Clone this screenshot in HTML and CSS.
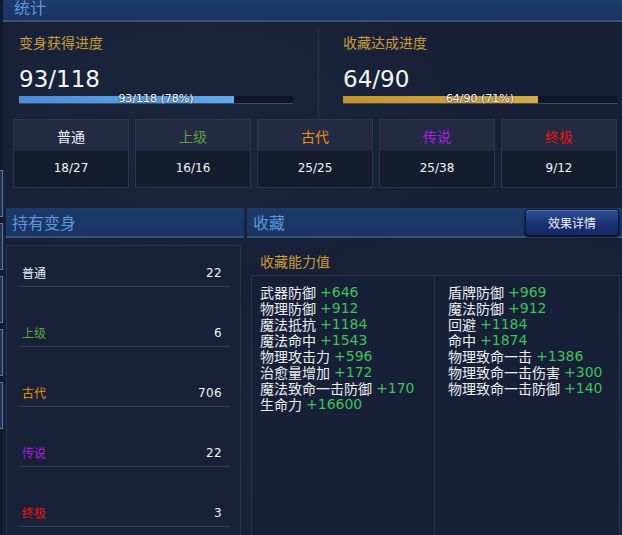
FILE: index.html
```html
<!DOCTYPE html>
<html lang="zh">
<head>
<meta charset="utf-8">
<title>统计</title>
<link rel="stylesheet" href="styles.css">
</head>
<body>
<div class="page">
  <div class="edge">
    <div class="edge-block"></div>
    <div class="edge-block"></div>
    <div class="edge-block"></div>
    <div class="edge-block"></div>
    <div class="edge-block"></div>
  </div>
  <div class="main">
    <div class="top-header"><span>统计</span></div>
    <section class="stats">
      <div class="progress-row">
        <div class="progress">
          <div class="p-title">变身获得进度</div>
          <div class="p-big">93/118</div>
          <div class="bar"><div class="fill blue" style="width:78.5%"></div><span class="bar-text">93/118 (78%)</span></div>
        </div>
        <div class="progress right">
          <div class="p-title">收藏达成进度</div>
          <div class="p-big">64/90</div>
          <div class="bar"><div class="fill gold" style="width:71%"></div><span class="bar-text">64/90 (71%)</span></div>
        </div>
      </div>
      <div class="cards">
        <div class="card"><div class="card-head c-normal">普通</div><div class="card-body">18/27</div></div>
        <div class="card"><div class="card-head c-high">上级</div><div class="card-body">16/16</div></div>
        <div class="card"><div class="card-head c-ancient">古代</div><div class="card-body">25/25</div></div>
        <div class="card"><div class="card-head c-legend">传说</div><div class="card-body">25/38</div></div>
        <div class="card"><div class="card-head c-ultimate">终极</div><div class="card-body">9/12</div></div>
      </div>
    </section>
    <div class="bottom">
      <div class="col-left">
        <div class="sec-header"><span class="sec-title">持有变身</span></div>
        <div class="list-panel">
          <div class="row"><span class="label c-normal">普通</span><span class="num">22</span></div>
          <div class="row"><span class="label c-high">上级</span><span class="num">6</span></div>
          <div class="row"><span class="label c-ancient">古代</span><span class="num">706</span></div>
          <div class="row"><span class="label c-legend">传说</span><span class="num">22</span></div>
          <div class="row"><span class="label c-ultimate">终极</span><span class="num">3</span></div>
        </div>
      </div>
      <div class="col-right">
        <div class="sec-header"><span class="sec-title">收藏</span><button class="btn">效果详情</button></div>
        <div class="coll-title">收藏能力值</div>
        <div class="coll-box">
          <div class="coll-col first">
            <div class="line"><span>武器防御</span><span class="val">+646</span></div>
            <div class="line"><span>物理防御</span><span class="val">+912</span></div>
            <div class="line"><span>魔法抵抗</span><span class="val">+1184</span></div>
            <div class="line"><span>魔法命中</span><span class="val">+1543</span></div>
            <div class="line"><span>物理攻击力</span><span class="val">+596</span></div>
            <div class="line"><span>治愈量增加</span><span class="val">+172</span></div>
            <div class="line"><span>魔法致命一击防御</span><span class="val">+170</span></div>
            <div class="line"><span>生命力</span><span class="val">+16600</span></div>
          </div>
          <div class="coll-col second">
            <div class="line"><span>盾牌防御</span><span class="val">+969</span></div>
            <div class="line"><span>魔法防御</span><span class="val">+912</span></div>
            <div class="line"><span>回避</span><span class="val">+1184</span></div>
            <div class="line"><span>命中</span><span class="val">+1874</span></div>
            <div class="line"><span>物理致命一击</span><span class="val">+1386</span></div>
            <div class="line"><span>物理致命一击伤害</span><span class="val">+300</span></div>
            <div class="line"><span>物理致命一击防御</span><span class="val">+140</span></div>
          </div>
        </div>
      </div>
    </div>
  </div>
</div>
</body>
</html>
```

FILE: styles.css
```css
* { box-sizing: border-box; margin: 0; padding: 0; }
html, body { width: 622px; height: 535px; overflow: hidden; }
body {
  background: #172036;
  font-family: "DejaVu Sans", "Noto Sans CJK SC", sans-serif;
  color: #e9edf3;
}
.page {
  display: flex;
  height: 535px;
  background:
    radial-gradient(ellipse 300px 200px at 480px 420px, rgba(40,55,80,0.35), transparent),
    radial-gradient(ellipse 260px 160px at 200px 120px, rgba(35,50,75,0.35), transparent),
    #172036;
}
.edge {
  width: 3px;
  flex: none;
  background: #101a2e;
  display: flex;
  flex-direction: column;
  padding-top: 170px;
  gap: 6px;
}
.edge-block {
  height: 47px;
  background: #1f3356;
  border: 1px solid #5a7aa6;
  border-left: none;
}
.main { flex: 1; display: flex; flex-direction: column; min-width: 0; }

.top-header {
  height: 22px;
  background: linear-gradient(#1c3a6b, #1a3462);
  border-bottom: 2px solid #3a5479;
  padding-left: 11px;
  overflow: hidden;
}
.top-header span {
  display: block;
  font-family: "Noto Sans CJK SC", sans-serif;
  font-size: 16px;
  line-height: 14px;
  color: #5e97de;
}

.stats { display: flex; flex-direction: column; }
.progress-row { display: flex; height: 97px; }
.progress { width: 315px; padding: 10px 0 0 16px; flex: none; }
.progress.right {
  width: auto;
  flex: 1;
  margin-top: 6px;
  padding-top: 4px;
  padding-left: 24px;
  border-left: 1px solid #27324b;
}
.p-title {
  font-family: "Noto Sans CJK SC", sans-serif;
  font-size: 14px;
  line-height: 20px;
  color: #c99b3b;
}
.p-big {
  font-size: 23px;
  line-height: 28px;
  margin-top: 13px;
  color: #f4f6f8;
}
.bar {
  position: relative;
  width: 274px;
  height: 8px;
  margin-top: 3px;
  background: #0f1526;
  border-bottom: 1px solid #434d66;
}
.fill { height: 100%; }
.fill.blue { background: linear-gradient(90deg, #4a8fd6, #62a8ec); }
.fill.gold { background: linear-gradient(90deg, #c4922a, #d4aa48); }
.bar-text {
  position: absolute;
  left: 0;
  right: 0;
  top: -3px;
  text-align: center;
  font-size: 11px;
  line-height: 11px;
  color: #ffffff;
  text-shadow: 0 0 2px #000;
}

.cards { display: flex; gap: 6px; padding-left: 10px; }
.card {
  width: 116px;
  height: 69px;
  border: 1px solid #2a3550;
  display: flex;
  flex-direction: column;
}
.card-head {
  height: 31px;
  background: #232a41;
  display: flex;
  align-items: center;
  justify-content: center;
  font-family: "Noto Sans CJK SC", sans-serif;
  font-size: 14px;
}
.card-body {
  flex: 1;
  background: #151c2d;
  display: flex;
  align-items: center;
  justify-content: center;
  font-size: 12px;
  padding-bottom: 3px;
  color: #f2f4f6;
}
.c-normal { color: #eceff3; }
.c-high { color: #5aa442; }
.c-ancient { color: #e8950c; }
.c-legend { color: #ad1fe6; }
.c-ultimate { color: #e41717; }

.bottom {
  flex: 1;
  margin-top: 20px;
  display: flex;
  gap: 3px;
  padding-left: 3px;
  min-height: 0;
}
.col-left { width: 238px; display: flex; flex-direction: column; }
.col-right { flex: 1; display: flex; flex-direction: column; }
.sec-header {
  height: 30px;
  background: linear-gradient(#1c3a6a, #1a3462);
  border-bottom: 2px solid #3a5479;
  display: flex;
  align-items: center;
  justify-content: space-between;
  padding-left: 6px;
  padding-right: 3px;
}
.sec-title {
  font-family: "Noto Sans CJK SC", sans-serif;
  font-size: 16px;
  color: #5e97de;
}
.btn {
  width: 94px;
  height: 27px;
  margin-top: 1px;
  background: linear-gradient(#2f4f96, #1b3274 55%, #142763);
  border: 1px solid #0a1430;
  border-radius: 3px;
  box-shadow: inset 0 1px 0 #5473b4, 0 1px 2px #000;
  color: #f0f2f6;
  font-family: "Noto Sans CJK SC", sans-serif;
  font-size: 12px;
}
.list-panel {
  flex: 1;
  width: 235px;
  margin-top: 7px;
  border: 1px solid #29324a;
  border-bottom: none;
  background: #182137;
  padding: 0 10px 0 13px;
}
.row {
  height: 60px;
  display: flex;
  align-items: flex-end;
  justify-content: space-between;
  padding: 0 8px 5px 2px;
  border-bottom: 1px solid #323c52;
}
.row:first-child { height: 41px; }
.label {
  font-family: "Noto Sans CJK SC", sans-serif;
  font-size: 12px;
  line-height: 16px;
}
.num { font-size: 12px; line-height: 16px; letter-spacing: 0.4px; color: #f2f4f6; }

.coll-title {
  margin-top: 13px;
  padding-left: 13px;
  font-family: "Noto Sans CJK SC", sans-serif;
  font-size: 14px;
  line-height: 20px;
  color: #c99b3b;
}
.coll-box {
  flex: 1;
  margin: 4px 2px 0 4px;
  border: 1px solid #29324a;
  border-bottom: none;
  background: #172036;
  display: grid;
  grid-template-columns: 183px 1fr;
}
.coll-col { padding-top: 8px; display: flex; flex-direction: column; }
.coll-col.first { padding-left: 8px; border-right: 1px solid #29324a; }
.coll-col.second { padding-left: 13px; }
.line {
  display: flex;
  align-items: center;
  gap: 4px;
  height: 16px;
  flex: none;
  font-family: "Noto Sans CJK SC", sans-serif;
  font-size: 14px;
  line-height: 16px;
  color: #eceff3;
  white-space: nowrap;
}
.val { font-family: "DejaVu Sans", sans-serif; color: #3ec25c; }
```
